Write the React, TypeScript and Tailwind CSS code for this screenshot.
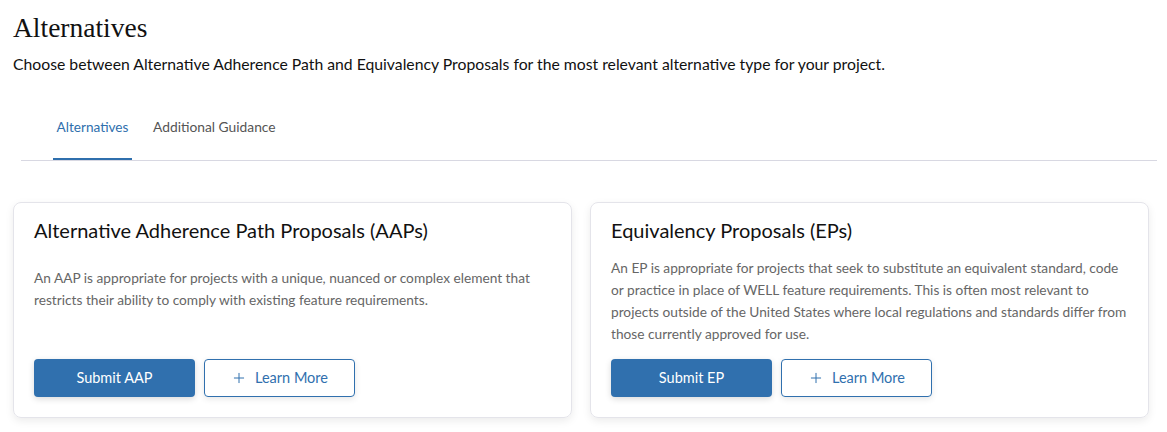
import { Plus } from "lucide-react";

const cards = [
  {
    title: "Alternative Adherence Path Proposals (AAPs)",
    text: "An AAP is appropriate for projects with a unique, nuanced or complex element that restricts their ability to comply with existing feature requirements.",
    button: "Submit AAP",
    descTop: "mt-[23px]",
  },
  {
    title: "Equivalency Proposals (EPs)",
    text: "An EP is appropriate for projects that seek to substitute an equivalent standard, code or practice in place of WELL feature requirements. This is often most relevant to projects outside of the United States where local regulations and standards differ from those currently approved for use.",
    button: "Submit EP",
    descTop: "mt-[13px]",
  },
];

const App = () => {
  return (
    <div className="w-[1167px] h-[432px] bg-white overflow-hidden font-['Lato',sans-serif]">
      <div className="px-[13px] pt-[11px]">
        <h1 className="text-[27.5px] leading-[33px] text-[#111] font-['Liberation_Serif',serif]">
          Alternatives
        </h1>
        <p className="mt-[10px] text-[15.75px] leading-[20px] text-[#111]">
          Choose between Alternative Adherence Path and Equivalency Proposals for the most relevant alternative type for your project.
        </p>
      </div>

      <div className="mt-[44px] ml-[21px] w-[1136px] border-b border-[#d8d8e2] flex">
        <div className="ml-[32px] w-[79px] flex flex-col items-center">
          <span className="text-[13.6px] leading-[18px] text-[#2f6fad] pb-[22px]">Alternatives</span>
          <span className="w-full h-[2px] bg-[#2f6fad]" />
        </div>
        <span className="ml-[21px] text-[13.8px] leading-[18px] text-[#555]">Additional Guidance</span>
      </div>

      <div className="mt-[41px] px-[13px] grid grid-cols-2 gap-[18px] w-[1162px]">
        {cards.map((c) => (
          <div
            key={c.title}
            className="h-[216px] rounded-lg border border-[#e4e4ea] shadow-[0_3px_8px_rgba(0,0,0,0.08)] px-[20px] pt-[13px] flex flex-col"
          >
            <h2 className="text-[20px] leading-[28px] text-[#111]">{c.title}</h2>
            <p className={`${c.descTop} text-[13.7px] leading-[22px] text-[#666]`}>{c.text}</p>
            <div className="mt-auto mb-[20px] flex gap-[9px]">
              <button className="w-[161px] h-[38px] rounded bg-[#3070ae] text-white text-[14.5px] shadow-[0_2px_6px_rgba(0,0,0,0.15)]">
                {c.button}
              </button>
              <button className="w-[151px] h-[38px] rounded border border-[#3070ae] text-[#3070ae] text-[14.5px] flex items-center justify-center gap-[8px] shadow-[0_2px_6px_rgba(0,0,0,0.1)]">
                <Plus size={16} strokeWidth={1.5} />
                Learn More
              </button>
            </div>
          </div>
        ))}
      </div>
    </div>
  );
};

export default App;
